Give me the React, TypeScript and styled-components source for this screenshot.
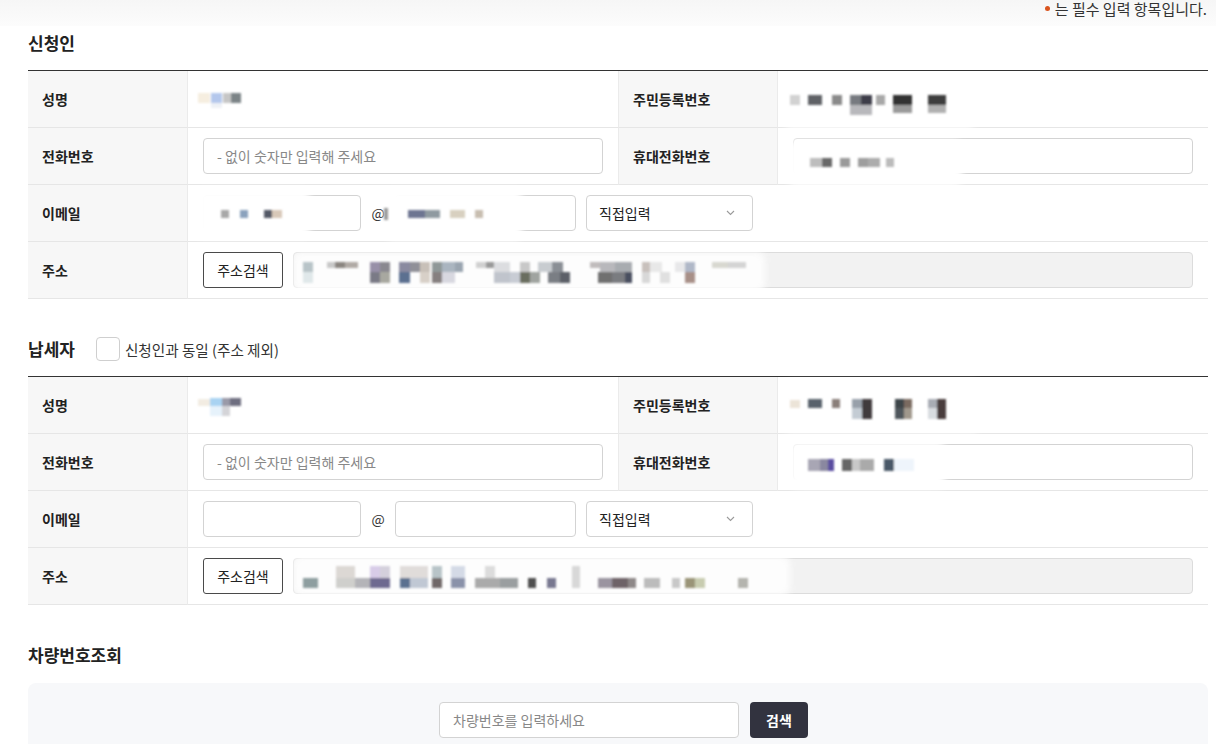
import React from 'react';
import styled, { createGlobalStyle } from 'styled-components';

const Global = createGlobalStyle`
  html, body { margin: 0; padding: 0; background: #fff; }
  body {
    font-family: "Noto Sans CJK KR", "Noto Sans", sans-serif;
    color: #222;
    -webkit-font-smoothing: antialiased;
  }
  * { box-sizing: border-box; }
`;

/* ---------- redaction overlay (pixelated values) ---------- */
type B = [number, number, number, number, string]; // x1,x2,y1,y2,color (page coords)
type P = [number, number, number, number, number?]; // x1,x2,y1,y2,opacity

const Overlay = styled.svg`
  position: absolute;
  left: 0;
  top: 0;
  width: 100%;
  height: 100%;
  pointer-events: none;
  overflow: visible;
`;

const Redact = ({ ox, oy, blocks, patches = [] }: { ox: number; oy: number; blocks: B[]; patches?: P[] }) => {
  const id = React.useId().replace(/[^a-zA-Z0-9]/g, '');
  return (
    <Overlay aria-hidden>
      <defs>
        <filter id={`p${id}`} x="-30%" y="-60%" width="160%" height="220%">
          <feGaussianBlur stdDeviation="3" />
        </filter>
        <filter id={`b${id}`} x="-10%" y="-40%" width="120%" height="180%">
          <feGaussianBlur stdDeviation="1.1" />
        </filter>
      </defs>
      {patches.map(([x1, x2, y1, y2, o], i) => (
        <rect key={i} x={x1 - ox} y={y1 - oy} width={x2 - x1} height={y2 - y1} rx={8} fill="#fff" opacity={o ?? 1} filter={`url(#p${id})`} />
      ))}
      <g filter={`url(#b${id})`}>
        {blocks.map(([x1, x2, y1, y2, c], i) => (
          <rect key={i} x={x1 - ox} y={y1 - oy} width={x2 - x1} height={y2 - y1} fill={c} />
        ))}
      </g>
    </Overlay>
  );
};

/* ---------- layout ---------- */
const TopBand = styled.div`
  height: 26px;
  background: linear-gradient(to bottom, #f6f6f6, #fcfcfc);
  display: flex;
  justify-content: flex-end;
  align-items: flex-start;
  padding-right: 9px;
`;

const Notice = styled.p`
  margin: 0;
  font-size: 15px;
  line-height: 17px;
  color: #333;
  display: flex;
  align-items: center;
  gap: 5px;
`;

const Dot = styled.span`
  width: 5px;
  height: 5px;
  border-radius: 50%;
  background: #d9541e;
`;

const Content = styled.main`
  padding: 0 8px 0 28px;
  display: flex;
  flex-direction: column;
`;

const Section = styled.section<{ $top: number }>`
  margin-top: ${(p) => p.$top}px;
`;

const TitleRow = styled.div`
  height: 26px;
  display: flex;
  align-items: center;
  margin-bottom: 14px;
`;

const Title = styled.h2`
  margin: 0;
  font-size: 17px;
  font-weight: 700;
  color: #222;
  line-height: 26px;
`;

const CheckLabel = styled.label`
  display: flex;
  align-items: center;
  gap: 5px;
  margin-left: 21px;
  font-size: 14.6px;
  color: #333;
`;

const Check = styled.input`
  appearance: none;
  margin: 0;
  width: 24px;
  height: 24px;
  border: 1px solid #cfcfcf;
  border-radius: 4px;
  background: #fff;
`;

const Table = styled.div`
  display: grid;
  grid-template-columns: 160px 430px 160px 430px;
  grid-auto-rows: 57px;
  border-top: 1px solid #333;
`;

const Label = styled.div<{ $mid?: boolean }>`
  background: #f7f7f7;
  border-bottom: 1px solid #e6e6e6;
  border-right: 1px solid #ebebeb;
  ${(p) => (p.$mid ? 'border-left: 1px solid #ebebeb;' : '')}
  display: flex;
  align-items: center;
  padding-left: 14px;
  font-size: 14px;
  font-weight: 700;
  color: #222;
`;

const Value = styled.div<{ $wide?: boolean }>`
  position: relative;
  ${(p) => (p.$wide ? 'grid-column: 2 / 5;' : '')}
  border-bottom: 1px solid #e6e6e6;
  display: flex;
  align-items: center;
  gap: 10px;
  padding: 0 15px;
`;

const TextInput = styled.input<{ $w?: number; $ro?: boolean }>`
  height: 36px;
  width: ${(p) => (p.$w ? `${p.$w}px` : '100%')};
  flex: ${(p) => (p.$w ? 'none' : '1')};
  border: 1px solid ${(p) => (p.$ro ? '#dcdcdc' : '#d3d3d3')};
  border-radius: 4px;
  background: ${(p) => (p.$ro ? '#f2f2f2' : '#fff')};
  padding: 0 13px;
  font-family: inherit;
  font-size: 14px;
  color: #222;
  outline: none;
  &::placeholder { color: #888; }
`;

const At = styled.span`
  font-size: 14px;
  color: #333;
  width: 14px;
  text-align: center;
`;

const SelectWrap = styled.div`
  position: relative;
  width: 167px;
  height: 36px;
`;

const Select = styled.select`
  appearance: none;
  width: 100%;
  height: 100%;
  border: 1px solid #d3d3d3;
  border-radius: 4px;
  background: #fff;
  padding: 0 12px;
  font-family: inherit;
  font-size: 14px;
  color: #222;
`;

const Chevron = styled.svg`
  position: absolute;
  right: 18px;
  top: 15px;
  pointer-events: none;
`;

const OutlineButton = styled.button`
  flex: none;
  height: 36px;
  width: 80px;
  border: 1px solid #4a4a4a;
  border-radius: 3px;
  background: #fff;
  font-family: inherit;
  font-size: 14px;
  color: #222;
  padding: 0;
`;

const SearchBox = styled.div`
  margin-top: 15px;
  background: #f7f8fa;
  border-radius: 8px;
  padding: 19px 0 19px 11px;
  display: flex;
  justify-content: center;
  gap: 11px;
`;

const DarkButton = styled.button`
  height: 36px;
  width: 58px;
  border: 0;
  border-radius: 4px;
  background: #32333f;
  color: #fff;
  font-family: inherit;
  font-size: 14px;
  font-weight: 700;
`;

const Dropdown = () => (
  <SelectWrap>
    <Select defaultValue="direct">
      <option value="direct">직접입력</option>
    </Select>
    <Chevron width="9" height="6" viewBox="0 0 9 6">
      <polyline points="1,1 4.5,4.5 8,1" fill="none" stroke="#9a9a9a" strokeWidth="1.1" />
    </Chevron>
  </SelectWrap>
);

/* ---------- redaction data ---------- */
const s1Name: B[] = [
  [198, 210, 93, 103, '#f6eee0'], [211, 222, 93, 103, '#b4c7ec'], [223, 231, 93, 103, '#c6c6c6'],
  [231, 241, 93, 103, '#7c8487'], [211, 222, 103, 108, '#eef1f6'],
];
const s1Id: B[] = [
  [790, 800, 95, 105, '#d2d2d2'], [808, 822, 95, 105, '#5e6266'], [832, 842, 95, 105, '#8a8a8a'],
  [850, 861, 95, 105, '#777a80'], [861, 872, 95, 105, '#3e3e4a'], [876, 885, 95, 105, '#a8a8a8'],
  [893, 912, 95, 105, '#333333'], [928, 946, 95, 105, '#3e3e3e'],
  [850, 872, 105, 115, '#b8b8bc'], [893, 912, 105, 113, '#9a9a9a'], [928, 946, 105, 113, '#b0b0b0'],
];
const s1Mobile: B[] = [
  [810, 822, 158, 167, '#bdbdbd'], [822, 832, 158, 167, '#676767'], [840, 850, 158, 167, '#9a9a9a'],
  [858, 868, 158, 167, '#9e9e9e'], [868, 880, 158, 167, '#acacac'], [886, 894, 158, 167, '#bbbbbb'],
];
const s1Email: B[] = [
  [221, 229, 210, 218, '#a8a8a8'], [240, 248, 210, 218, '#8aa2bd'], [264, 272, 210, 218, '#535866'],
  [272, 282, 210, 218, '#d8c8b8'], [384, 388, 208, 220, '#9a9a9a'], [408, 425, 210, 218, '#6d7591'],
  [425, 440, 210, 218, '#8f9aa0'], [450, 465, 210, 218, '#d8d0c0'], [475, 483, 210, 218, '#c8beb0'],
];
const s1Addr: B[] = [
  [303, 313, 262, 272, '#b8c4c8'], [327, 335, 262, 268, '#c8c8c8'], [335, 345, 262, 268, '#8a8580'],
  [345, 358, 262, 268, '#b0aaa5'], [370, 380, 262, 272, '#9890a8'], [380, 390, 262, 272, '#8a8890'],
  [399, 410, 262, 272, '#8a8aa0'], [410, 420, 262, 272, '#909098'], [420, 430, 262, 272, '#c8c0b8'],
  [432, 442, 262, 272, '#8f9898'], [442, 455, 262, 272, '#aab5c0'], [455, 463, 262, 272, '#9aa5b0'],
  [476, 486, 262, 268, '#d0d0d0'], [486, 494, 262, 268, '#999999'], [494, 510, 262, 272, '#dcdde0'],
  [520, 530, 262, 272, '#c8c8c8'], [538, 552, 262, 272, '#c8ccd0'], [552, 563, 262, 272, '#8a8f95'],
  [590, 600, 262, 268, '#c0bcbc'], [600, 615, 262, 272, '#b8b8bc'], [615, 632, 262, 272, '#a8acb0'],
  [642, 650, 262, 272, '#c8c0bc'], [650, 662, 262, 272, '#e8e8e8'], [675, 685, 262, 272, '#e8e8ea'],
  [685, 695, 262, 272, '#b0b8c8'], [712, 728, 262, 268, '#d8d8d0'], [728, 746, 262, 268, '#d4d4d4'],
  [303, 313, 272, 283, '#e0e8ea'], [370, 380, 272, 283, '#7a7a86'], [380, 390, 272, 283, '#a8a8a0'],
  [399, 410, 272, 283, '#5c7090'], [420, 430, 272, 283, '#d8d0c8'], [432, 442, 272, 283, '#868080'],
  [442, 455, 272, 283, '#d8d8e0'], [494, 510, 272, 283, '#c0c4cc'], [510, 520, 272, 283, '#c8ccd4'],
  [520, 530, 272, 283, '#6a6e60'], [530, 540, 272, 283, '#a0a4a0'], [548, 560, 272, 283, '#7a7e84'],
  [560, 570, 272, 283, '#5c6068'], [598, 612, 272, 283, '#707070'], [612, 625, 272, 283, '#7a7c80'],
  [625, 632, 272, 283, '#4a5060'], [642, 650, 272, 283, '#d8d8d8'], [660, 670, 272, 283, '#e0e0e0'],
  [685, 695, 272, 283, '#a89088'],
];
const s2Name: B[] = [
  [198, 210, 399, 406, '#f2ece2'], [210, 222, 398, 406, '#a9d3f2'], [222, 230, 398, 406, '#9a9aa8'],
  [230, 241, 398, 406, '#6e6e80'], [210, 222, 406, 416, '#e6f2fb'], [222, 230, 406, 416, '#d4d4d8'],
];
const s2Id: B[] = [
  [790, 800, 400, 408, '#ece4d8'], [808, 822, 399, 408, '#58626c'], [832, 840, 399, 408, '#8a7f7a'],
  [852, 862, 399, 408, '#98a0aa'], [862, 872, 399, 419, '#403a3c'], [852, 862, 408, 419, '#c4ccd4'],
  [895, 904, 399, 408, '#3e4448'], [904, 912, 399, 408, '#7a6a60'], [895, 904, 408, 419, '#50565c'],
  [904, 912, 408, 419, '#a0988c'], [928, 937, 399, 419, '#a8acb4'], [937, 946, 399, 419, '#4a3e3c'],
  [928, 937, 408, 419, '#d8dce0'],
];
const s2Mobile: B[] = [
  [808, 820, 459, 471, '#a8a6b4'], [820, 828, 459, 471, '#8a88a0'], [828, 834, 459, 471, '#5a4ea0'],
  [842, 852, 459, 471, '#666666'], [852, 860, 459, 471, '#c8c8c8'], [860, 874, 459, 471, '#aaaaaa'],
  [884, 894, 459, 471, '#4a5868'], [894, 914, 459, 471, '#eef4fb'],
];
const s2Addr: B[] = [
  [303, 318, 578, 588, '#8e9ea0'], [336, 355, 566, 578, '#dcd8d4'], [336, 355, 578, 588, '#cfcfcc'],
  [355, 370, 578, 588, '#b4b4b8'], [370, 380, 566, 578, '#d8cce8'], [370, 390, 578, 588, '#6e6a90'],
  [380, 390, 566, 578, '#d4d0dc'], [400, 410, 578, 588, '#5a7090'], [400, 428, 566, 578, '#e0dcda'],
  [410, 428, 578, 588, '#c0c8d4'], [432, 442, 566, 578, '#b8c4c8'], [432, 442, 578, 588, '#706868'],
  [451, 465, 566, 578, '#d4dae6'], [451, 465, 578, 588, '#8a92aa'], [475, 500, 578, 588, '#aaaaaa'],
  [485, 495, 566, 578, '#dcdcdc'], [500, 518, 578, 588, '#9a9ea0'], [528, 536, 578, 588, '#505050'],
  [547, 556, 578, 588, '#787890'], [572, 580, 566, 588, '#d8d8d8'], [598, 612, 578, 588, '#9a94a0'],
  [612, 628, 578, 588, '#6e6468'], [628, 636, 578, 588, '#8e8888'], [644, 660, 578, 588, '#bcbcbc'],
  [672, 680, 578, 588, '#c8c8c8'], [685, 695, 578, 588, '#9a9478'], [695, 705, 578, 588, '#c8ccb0'],
  [738, 748, 578, 588, '#b4b4ae'],
];

export default function App() {
  return (
    <>
      <Global />
      <TopBand>
        <Notice>
          <Dot />는 필수 입력 항목입니다.
        </Notice>
      </TopBand>
      <Content>
        <Section $top={4}>
          <TitleRow>
            <Title>신청인</Title>
          </TitleRow>
          <Table>
            <Label>성명</Label>
            <Value>
              <Redact ox={188} oy={71} blocks={s1Name} />
            </Value>
            <Label $mid>주민등록번호</Label>
            <Value>
              <Redact ox={778} oy={71} blocks={s1Id} patches={[[784, 975, 80, 128, 1]]} />
            </Value>

            <Label>전화번호</Label>
            <Value>
              <TextInput placeholder="- 없이 숫자만 입력해 주세요" />
            </Value>
            <Label $mid>휴대전화번호</Label>
            <Value>
              <TextInput />
              <Redact ox={778} oy={128} blocks={s1Mobile} patches={[[788, 962, 140, 186, 1]]} />
            </Value>

            <Label>이메일</Label>
            <Value $wide>
              <TextInput $w={158} />
              <At>@</At>
              <TextInput $w={181} />
              <Dropdown />
              <Redact
                ox={188}
                oy={185}
                blocks={s1Email}
                patches={[[197, 310, 190, 238, 1], [386, 522, 190, 240, 1]]}
              />
            </Value>

            <Label>주소</Label>
            <Value $wide>
              <OutlineButton>주소검색</OutlineButton>
              <TextInput $ro readOnly />
              <Redact ox={188} oy={242} blocks={s1Addr} patches={[[293, 765, 252, 292, 0.85]]} />
            </Value>
          </Table>
        </Section>

        <Section $top={37}>
          <TitleRow>
            <Title>납세자</Title>
            <CheckLabel>
              <Check type="checkbox" />
              신청인과 동일 (주소 제외)
            </CheckLabel>
          </TitleRow>
          <Table>
            <Label>성명</Label>
            <Value>
              <Redact ox={188} oy={377} blocks={s2Name} />
            </Value>
            <Label $mid>주민등록번호</Label>
            <Value>
              <Redact ox={778} oy={377} blocks={s2Id} patches={[[784, 980, 382, 432, 1]]} />
            </Value>

            <Label>전화번호</Label>
            <Value>
              <TextInput placeholder="- 없이 숫자만 입력해 주세요" />
            </Value>
            <Label $mid>휴대전화번호</Label>
            <Value>
              <TextInput />
              <Redact ox={778} oy={434} blocks={s2Mobile} patches={[[790, 945, 442, 488, 1]]} />
            </Value>

            <Label>이메일</Label>
            <Value $wide>
              <TextInput $w={158} />
              <At>@</At>
              <TextInput $w={181} />
              <Dropdown />
            </Value>

            <Label>주소</Label>
            <Value $wide>
              <OutlineButton>주소검색</OutlineButton>
              <TextInput $ro readOnly />
              <Redact ox={188} oy={548} blocks={s2Addr} patches={[[293, 790, 556, 596, 0.85]]} />
            </Value>
          </Table>
        </Section>

        <Section $top={37}>
          <TitleRow>
            <Title>차량번호조회</Title>
          </TitleRow>
          <SearchBox>
            <TextInput $w={300} placeholder="차량번호를 입력하세요" />
            <DarkButton>검색</DarkButton>
          </SearchBox>
        </Section>
      </Content>
    </>
  );
}
